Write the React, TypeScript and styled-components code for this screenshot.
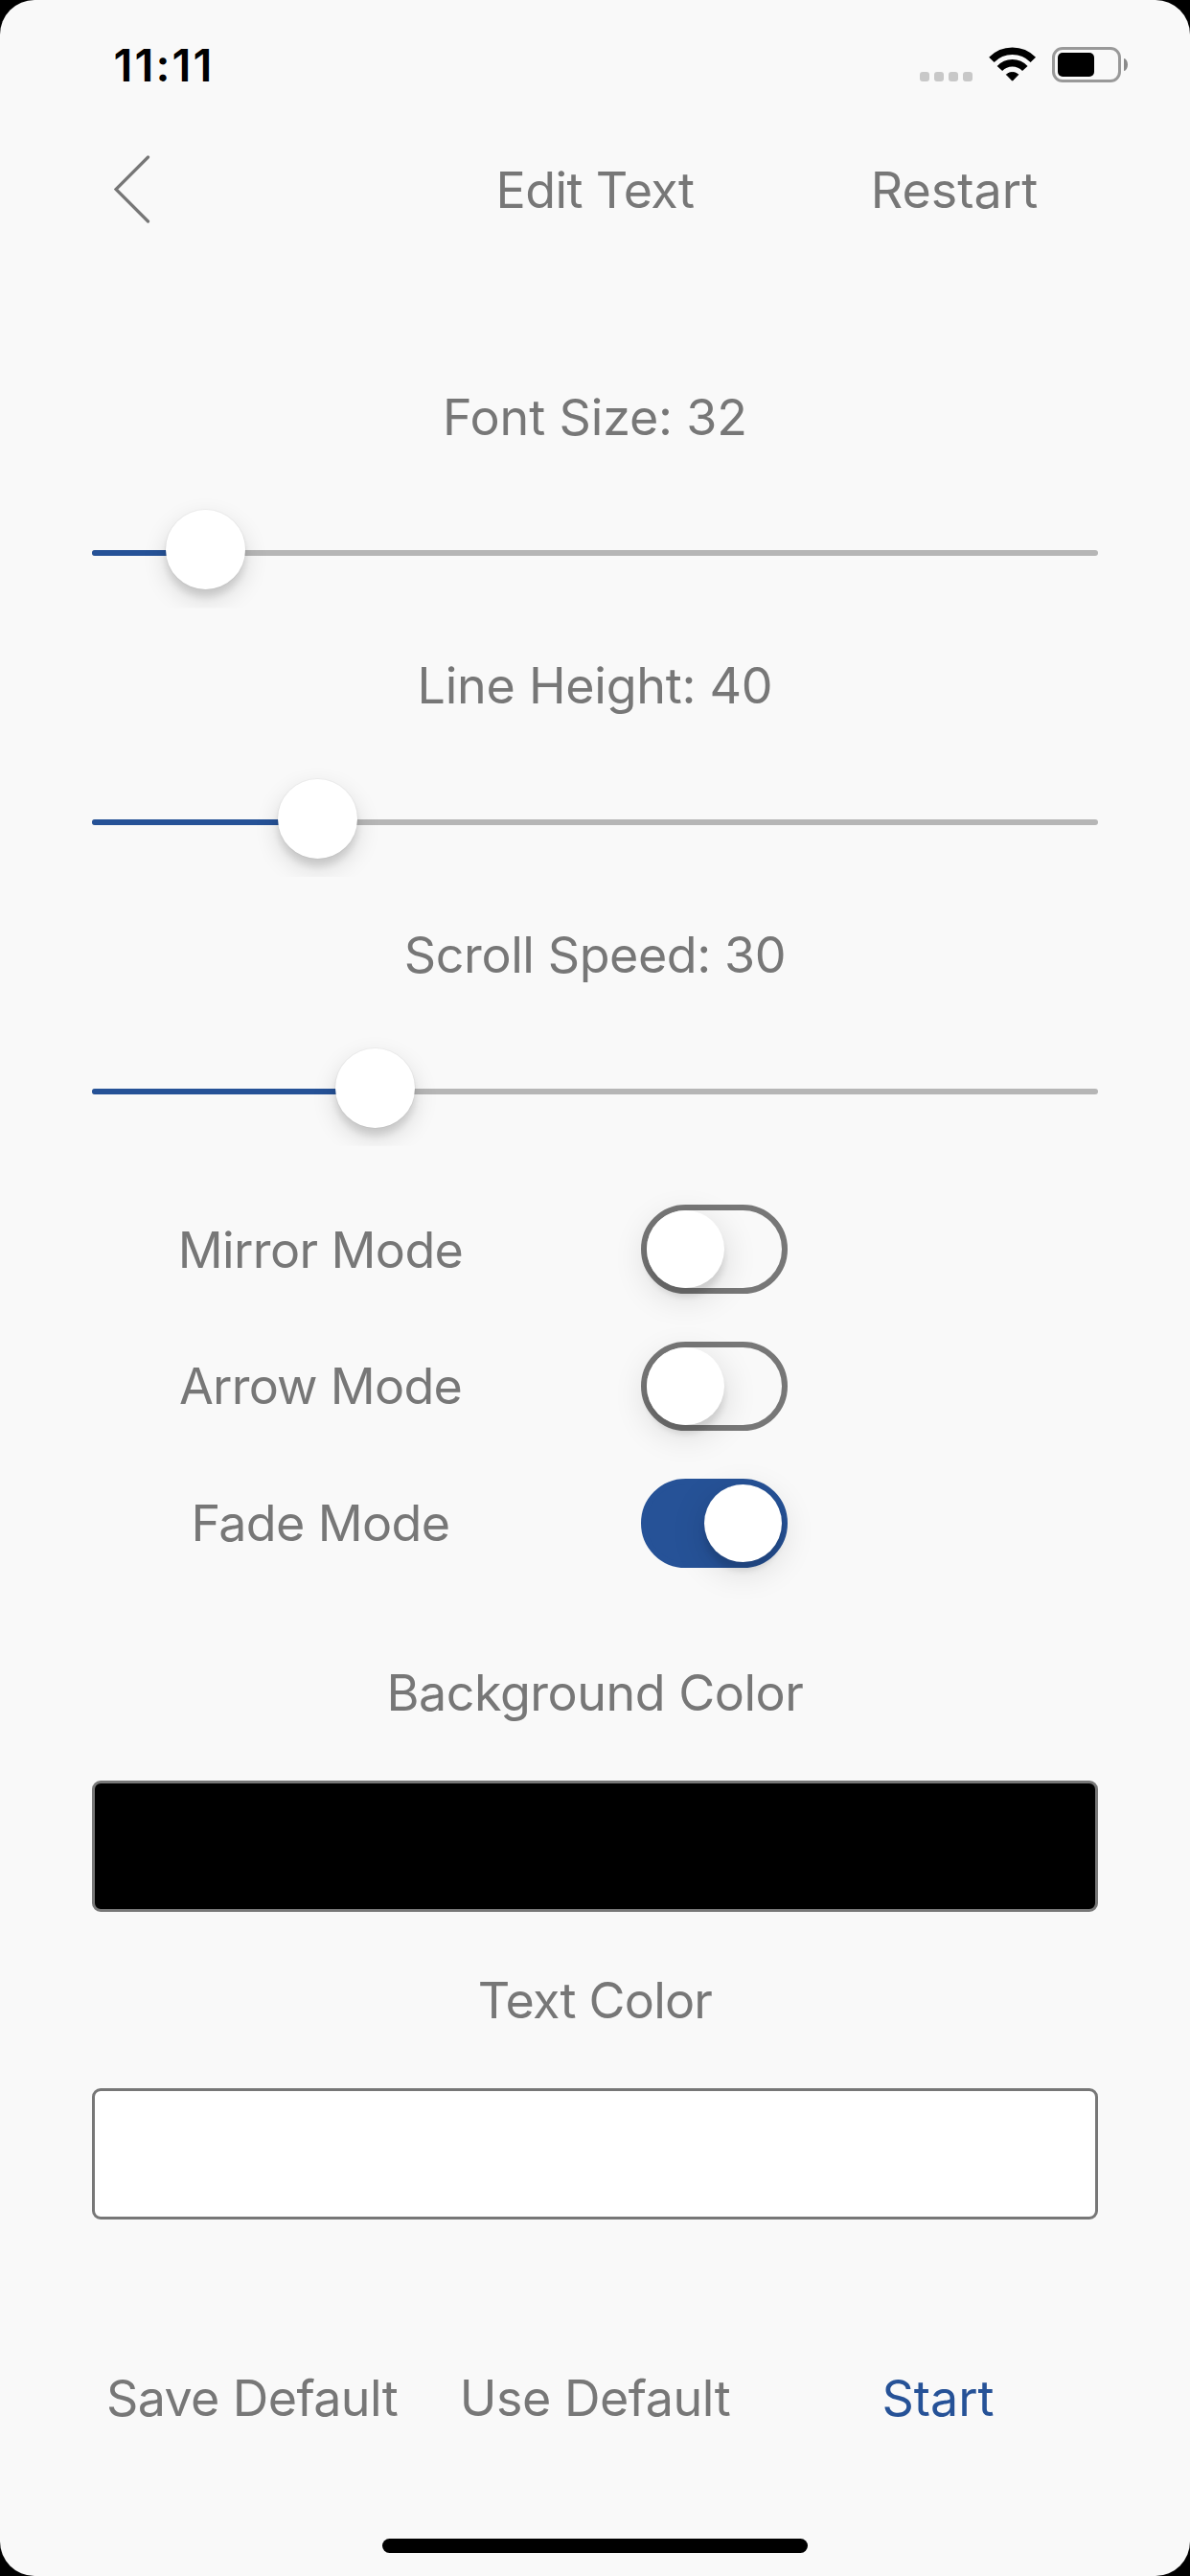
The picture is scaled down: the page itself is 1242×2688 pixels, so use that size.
import React, { useState } from "react";
import styled, { createGlobalStyle } from "styled-components";

const GREY = "#777777";
const BLUE = "#265297";

const GlobalStyle = createGlobalStyle`
  * { box-sizing: border-box; }
  body {
    margin: 0;
    background: #000;
    font-family: Inter, "Liberation Sans", sans-serif;
  }
`;

const Screen = styled.main`
  display: flex;
  flex-direction: column;
  width: 1242px;
  height: 2688px;
  overflow: hidden;
  border-radius: 36px;
  background: #f9f9f9;
  color: ${GREY};
`;

const StatusBar = styled.header`
  display: flex;
  align-items: flex-start;
  height: 132px;
  padding: 39px 65px 0 118.5px;
`;

const Time = styled.time`
  margin-right: auto;
  color: #000;
  font-size: 47px;
  font-weight: 600;
  line-height: 57px;
  letter-spacing: 2.1px;
`;

const SignalDots = styled.div`
  display: flex;
  gap: 5px;
  margin: 36px 17px 0 0;
`;

const Dot = styled.span`
  width: 10px;
  height: 10px;
  border-radius: 3px;
  background: #c8c8c8;
`;

const WifiIcon = styled.svg`
  width: 50px;
  height: 38px;
  margin: 10px 16px 0 0;
`;

const Battery = styled.div`
  display: flex;
  align-items: center;
  gap: 3px;
  height: 37px;
  margin-top: 10px;
`;

const BatteryBody = styled.div`
  width: 72px;
  height: 37px;
  padding: 3px;
  border: 3px solid #999;
  border-radius: 11px;
`;

const BatteryLevel = styled.div`
  width: 38px;
  height: 25px;
  border-radius: 5px;
  background: #000;
`;

const BatteryCap = styled.div`
  width: 4px;
  height: 13px;
  border-radius: 0 4px 4px 0 / 0 6.5px 6.5px 0;
  background: #8a8a8a;
`;

const Text = styled.span<{ $spacing?: number }>`
  font-size: 52px;
  line-height: 63px;
  letter-spacing: ${(p) => p.$spacing ?? 0}px;
  white-space: nowrap;
`;

const NavBar = styled.nav`
  display: grid;
  grid-template-columns: repeat(3, 1fr);
  height: 271.5px;
  padding: 30px 84px 0;
`;

const PlainButton = styled.button<{ $accent?: boolean }>`
  display: flex;
  justify-content: center;
  align-items: flex-start;
  padding: 5px 0 0;
  border: 0;
  background: none;
  color: ${(p) => (p.$accent ? BLUE : GREY)};
  font-family: inherit;
`;

const BackButton = styled(PlainButton)`
  justify-content: flex-start;
  padding: 0 0 0 35px;
`;

const Chevron = styled.svg`
  width: 40px;
  height: 74px;
`;

const Heading = styled.h1`
  display: flex;
  justify-content: center;
  margin: 0;
  padding-top: 5px;
  font-weight: 400;
`;

const RestartButton = styled(PlainButton)`
  padding-left: 34px;
`;

const SliderGroup = styled.section`
  display: flex;
  flex-direction: column;
  align-items: center;
  height: 280.7px;
  padding: 0 96px;
`;

const Slider = styled.div`
  width: 100%;
  height: 123px;
  margin-top: 44.9px;
  padding-top: 63px;
  clip-path: inset(0 -96px);
`;

const Track = styled.div`
  position: relative;
  height: 6px;
  border-radius: 3px;
  background: #b6b6b6;
`;

const Filled = styled.div`
  height: 6px;
  border-radius: 3px;
  background: ${BLUE};
`;

const Thumb = styled.div`
  position: absolute;
  top: -42px;
  width: 83px;
  height: 83px;
  border-radius: 50%;
  background: #fff;
  box-shadow: 0 8px 7px rgba(0, 0, 0, 0.1), 0 10px 26px rgba(0, 0, 0, 0.14),
    0 0 0 1px rgba(0, 0, 0, 0.03);
`;

const Modes = styled.section`
  display: flex;
  flex-direction: column;
  height: 489.4px;
  padding: 11.6px 96px 0;
`;

const ModeRow = styled.label`
  display: grid;
  grid-template-columns: 477px 153px;
  column-gap: 96px;
  height: 142.75px;
`;

const ModeName = styled.div`
  display: flex;
  justify-content: center;
  align-items: flex-start;
  padding-top: 15.35px;
`;

const Switch = styled.div<{ $on: boolean }>`
  display: flex;
  justify-content: ${(p) => (p.$on ? "flex-end" : "flex-start")};
  height: 93px;
  border: 6px solid ${(p) => (p.$on ? BLUE : GREY)};
  border-radius: 47px;
  background: ${(p) => (p.$on ? BLUE : "transparent")};
`;

const Knob = styled.div`
  width: 81px;
  height: 81px;
  border-radius: 50%;
  background: #fff;
  box-shadow: 0 9px 36px rgba(0, 0, 0, 0.14), 0 9px 6px rgba(0, 0, 0, 0.1);
`;

const ColorGroup = styled.section`
  display: flex;
  flex-direction: column;
  align-items: center;
  gap: 60px;
  height: 321px;
  padding: 0 96px;
`;

const Swatch = styled.div<{ $color: string }>`
  width: 100%;
  height: 137px;
  border: 3px solid ${GREY};
  border-radius: 9px;
  background: ${(p) => p.$color};
`;

const Actions = styled.footer`
  display: grid;
  grid-template-columns: repeat(3, 1fr);
  height: 272px;
  padding: 89px 84px 0;
`;

const HomeIndicator = styled.div`
  align-self: center;
  width: 444px;
  height: 15px;
  border-radius: 8px;
  background: #000;
`;

const sliders = [
  { name: "Font Size", value: 32, offset: 77, spacing: -0.16 },
  { name: "Line Height", value: 40, offset: 194, spacing: -0.27 },
  { name: "Scroll Speed", value: 30, offset: 254, spacing: -0.42 },
];

const initialModes = [
  { name: "Mirror Mode", on: false, spacing: -0.61 },
  { name: "Arrow Mode", on: false, spacing: -0.77 },
  { name: "Fade Mode", on: true, spacing: -0.64 },
];

const colors = [
  { name: "Background Color", value: "#000", spacing: -0.48 },
  { name: "Text Color", value: "#fff", spacing: -0.79 },
];

export default function App() {
  const [modes, setModes] = useState(initialModes);
  const toggle = (name: string) =>
    setModes(modes.map((m) => (m.name === name ? { ...m, on: !m.on } : m)));

  return (
    <>
      <GlobalStyle />
      <Screen>
        <StatusBar>
          <Time>11:11</Time>
          <SignalDots>
            {[0, 1, 2, 3].map((i) => (
              <Dot key={i} />
            ))}
          </SignalDots>
          <WifiIcon viewBox="0 0 50 38" fill="none" stroke="#000">
            <path d="M2.9 13.4A30.4 30.4 0 0 1 46.3 13.4" strokeWidth="7.6" />
            <path d="M11.4 22.6A17.8 17.8 0 0 1 37.8 22.6" strokeWidth="7.4" />
            <path
              d="M18.4 28.8A9.4 9.4 0 0 1 30.8 28.8L24.6 35.2Z"
              fill="#000"
              strokeWidth="1"
              strokeLinejoin="round"
            />
          </WifiIcon>
          <Battery>
            <BatteryBody>
              <BatteryLevel />
            </BatteryBody>
            <BatteryCap />
          </Battery>
        </StatusBar>

        <NavBar>
          <BackButton aria-label="Back">
            <Chevron viewBox="0 0 40 74" fill="none" stroke={GREY} strokeWidth="3.2" strokeLinecap="round">
              <path d="M35.5 2L2 35.5L35.5 69" />
            </Chevron>
          </BackButton>
          <Heading>
            <Text $spacing={-0.6}>Edit Text</Text>
          </Heading>
          <RestartButton>
            <Text>Restart</Text>
          </RestartButton>
        </NavBar>

        {sliders.map((s) => (
          <SliderGroup key={s.name}>
            <Text $spacing={s.spacing}>{`${s.name}: ${s.value}`}</Text>
            <Slider>
              <Track>
                <Filled style={{ width: s.offset + 41 }} />
                <Thumb style={{ left: s.offset }} />
              </Track>
            </Slider>
          </SliderGroup>
        ))}

        <Modes>
          {modes.map((m) => (
            <ModeRow key={m.name} onClick={() => toggle(m.name)}>
              <ModeName>
                <Text $spacing={m.spacing}>{m.name}</Text>
              </ModeName>
              <Switch $on={m.on}>
                <Knob />
              </Switch>
            </ModeRow>
          ))}
        </Modes>

        {colors.map((c) => (
          <ColorGroup key={c.name}>
            <Text $spacing={c.spacing}>{c.name}</Text>
            <Swatch $color={c.value} />
          </ColorGroup>
        ))}

        <Actions>
          <PlainButton>
            <Text $spacing={-0.62}>Save Default</Text>
          </PlainButton>
          <PlainButton>
            <Text $spacing={-0.47}>Use Default</Text>
          </PlainButton>
          <PlainButton $accent>
            <Text>Start</Text>
          </PlainButton>
        </Actions>
        <HomeIndicator />
      </Screen>
    </>
  );
}
